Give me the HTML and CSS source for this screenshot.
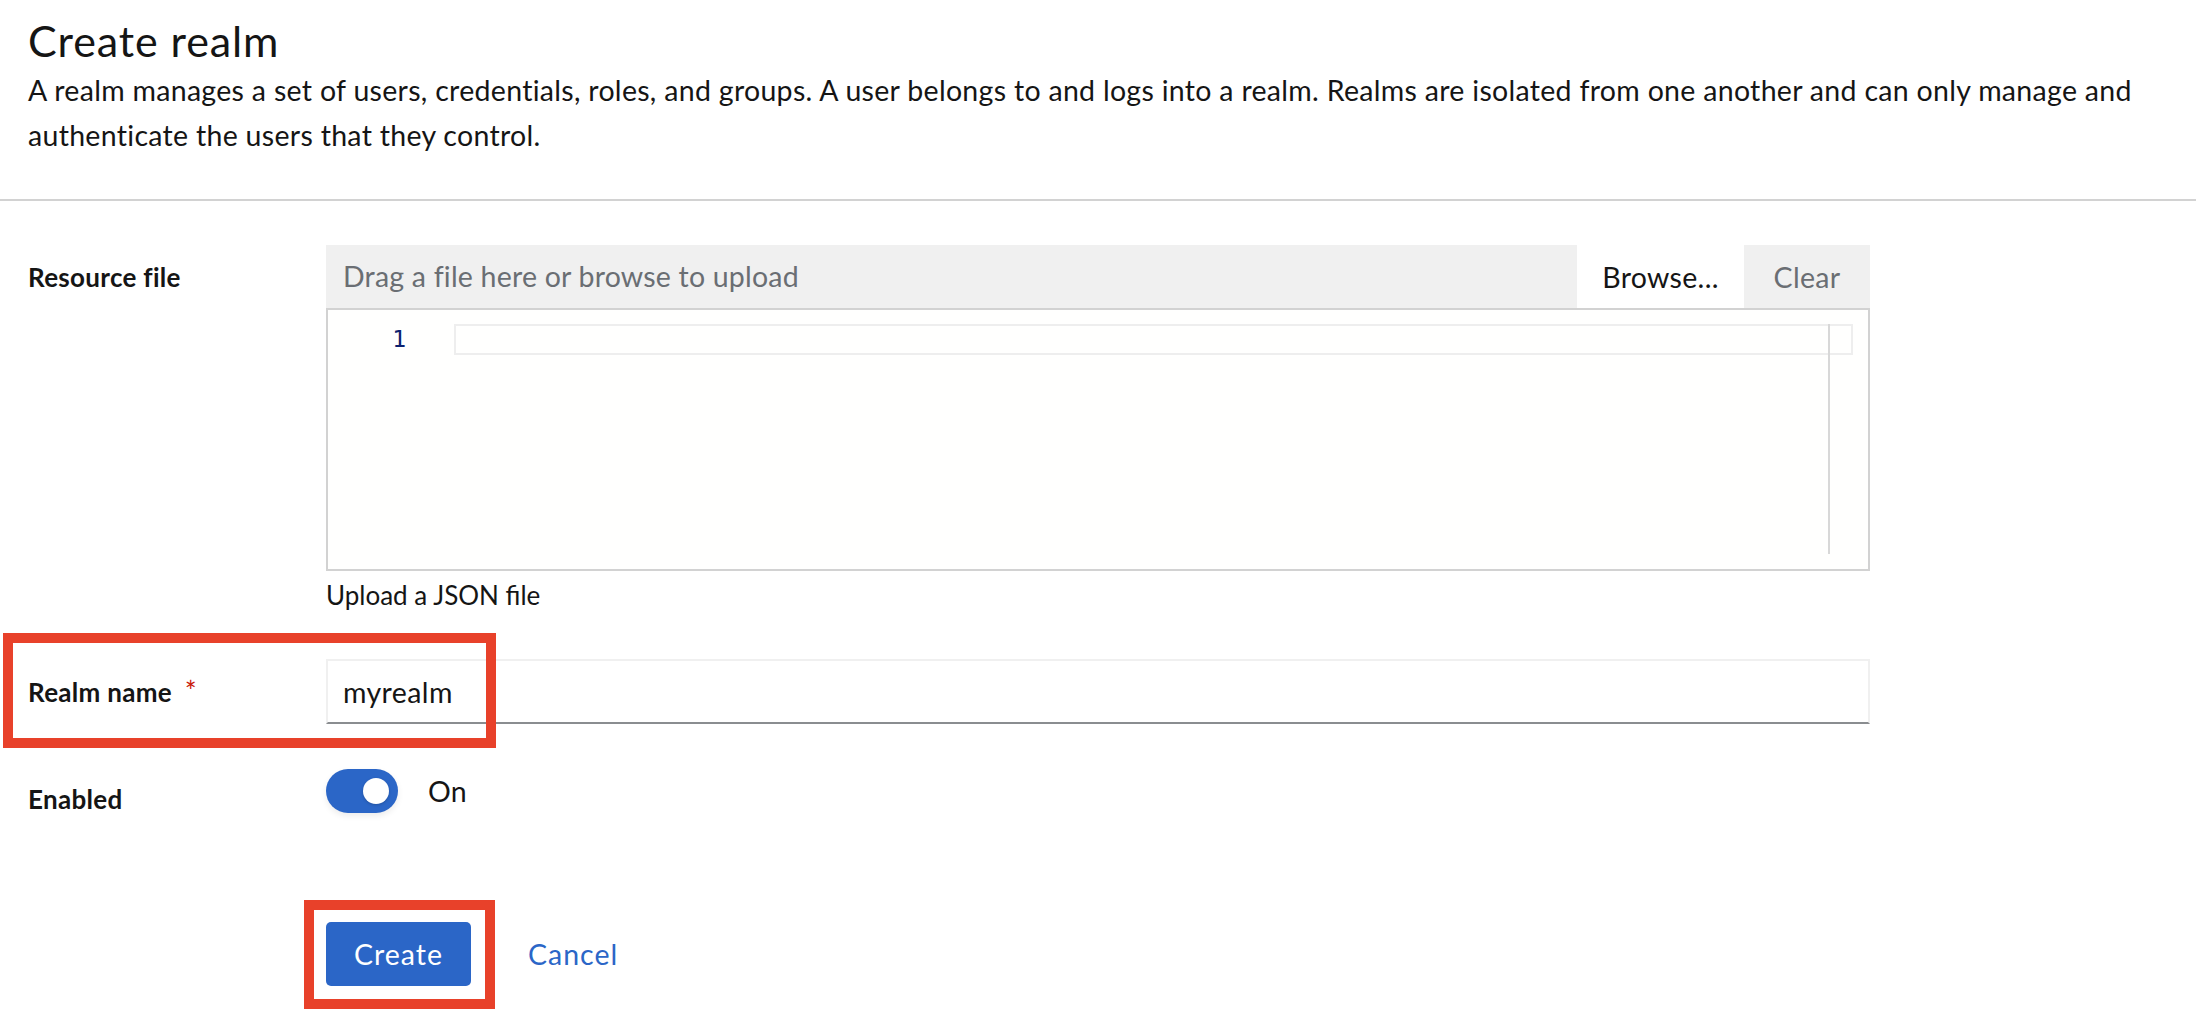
FILE: index.html
```html
<!DOCTYPE html>
<html lang="en">
<head>
<meta charset="utf-8">
<title>Create realm</title>
<link rel="stylesheet" href="styles.css">
</head>
<body>
<header class="page-header">
  <h1 class="title">Create realm</h1>
  <p class="desc">A realm manages a set of users, credentials, roles, and groups. A user belongs to and logs into a realm. Realms are isolated from one another and can only manage and authenticate the users that they control.</p>
</header>
<main class="form">
  <div class="row row-file">
    <div class="label label-file">Resource file</div>
    <div class="control">
      <div class="upload-bar">
        <div class="upload-placeholder">Drag a file here or browse to upload</div>
        <button class="btn-browse" type="button">Browse...</button>
        <button class="btn-clear" type="button">Clear</button>
      </div>
      <div class="editor">
        <div class="gutter"><span class="line-no">1</span></div>
        <div class="code-area">
          <div class="current-line"></div>
          <div class="ruler"></div>
        </div>
      </div>
      <div class="helper">Upload a JSON file</div>
    </div>
  </div>
  <div class="row row-name">
    <div class="label label-name">Realm name <span class="required">*</span></div>
    <div class="control">
      <input class="text-input" type="text" value="myrealm">
    </div>
  </div>
  <div class="row row-enabled">
    <div class="label label-enabled">Enabled</div>
    <div class="control">
      <div class="toggle-wrap">
        <div class="toggle"><div class="toggle-knob"></div></div>
        <span class="toggle-label">On</span>
      </div>
    </div>
  </div>
  <div class="actions">
    <button class="btn-primary" type="button">Create</button>
    <button class="btn-link" type="button">Cancel</button>
  </div>
</main>
<div class="annot annot-name"></div>
<div class="annot annot-create"></div>
</body>
</html>
```

FILE: styles.css
```css
* { box-sizing: border-box; }
html, body { margin: 0; padding: 0; background: #ffffff; }
body {
  font-family: Lato, "Liberation Sans", sans-serif;
  color: #151515;
  position: relative;
  width: 2196px;
  min-height: 1032px;
}

/* header */
.page-header {
  padding: 13px 28px 41px;
  border-bottom: 2px solid #d2d2d2;
}
.title {
  margin: 0;
  font-size: 43px;
  line-height: 55px;
  font-weight: 400;
  letter-spacing: 0.9px;
}
.desc {
  margin: 0;
  font-size: 28.5px;
  line-height: 45px;
  letter-spacing: 0.3px;
}

/* form */
.form { padding: 44px 0 0 28px; }
.row {
  display: grid;
  grid-template-columns: 298px 1544px;
  align-items: start;
}
.row-file { margin-bottom: 46px; }
.row-name { margin-bottom: 45px; }
.row-enabled { margin-bottom: 105px; }

.label {
  font-size: 26px;
  line-height: 36px;
  font-weight: 700;
  letter-spacing: 0.3px;
}
.label-file, .label-name { padding-top: 14px; }
.label-enabled { padding-top: 12px; }
.required {
  color: #c9190b;
  font-weight: 400;
  font-size: 28px;
  margin-left: 6px;
}

/* file upload */
.upload-bar {
  display: flex;
  height: 63px;
  background: #f0f0f0;
}
.upload-placeholder {
  flex: 1;
  padding-left: 17px;
  font-size: 28.5px;
  line-height: 63px;
  letter-spacing: 0.2px;
  color: #6a6e73;
}
.btn-browse, .btn-clear {
  border: none;
  padding: 0;
  font-family: inherit;
  font-size: 28.5px;
  letter-spacing: 0.3px;
  height: 63px;
}
.btn-browse {
  width: 167px;
  background: #ffffff;
  color: #151515;
}
.btn-clear {
  width: 126px;
  background: transparent;
  color: #6a6e73;
}

.editor {
  display: flex;
  height: 263px;
  border: 2px solid #d2d2d2;
  background: #fffffe;
}
.gutter {
  width: 126px;
  padding: 14px 48px 0 0;
  text-align: right;
}
.line-no {
  font-family: "DejaVu Sans Mono", "Liberation Mono", monospace;
  font-size: 23px;
  line-height: 31px;
  color: #0b216f;
}
.code-area {
  flex: 1;
  position: relative;
  padding: 14px 15px 0 0;
}
.current-line {
  height: 31px;
  border: 2px solid #eeeeee;
}
.ruler {
  position: absolute;
  top: 14px;
  right: 38px;
  width: 2px;
  height: 230px;
  background: #d8d8d8;
}
.helper {
  margin-top: 6px;
  font-size: 26px;
  line-height: 36px;
}

/* text input */
.text-input {
  display: block;
  width: 100%;
  height: 65px;
  border: 2px solid #f0f0f0;
  border-bottom-color: #8a8d90;
  padding: 0 15px;
  font-family: inherit;
  font-size: 28.5px;
  letter-spacing: 0.4px;
  color: #151515;
  background: #ffffff;
  outline: none;
}

/* toggle */
.toggle-wrap {
  display: flex;
  align-items: center;
  gap: 30px;
  height: 44px;
}
.toggle {
  width: 72px;
  height: 44px;
  border-radius: 22px;
  background: #2b66c7;
  display: flex;
  align-items: center;
  justify-content: flex-end;
  padding-right: 9px;
  box-shadow: 0 3px 6px rgba(0, 0, 0, 0.08);
}
.toggle-knob {
  width: 26px;
  height: 26px;
  border-radius: 50%;
  background: #ffffff;
  box-shadow: 0 1px 3px rgba(0, 0, 0, 0.2);
}
.toggle-label {
  font-size: 28.5px;
  line-height: 44px;
  letter-spacing: 0.3px;
}

/* actions */
.actions {
  display: flex;
  align-items: center;
  margin-left: 298px;
}
.btn-primary {
  height: 64px;
  padding: 0 28px;
  border: none;
  border-radius: 5px;
  background: #2b66c7;
  color: #ffffff;
  font-family: inherit;
  font-size: 28.5px;
  letter-spacing: 1px;
}
.btn-link {
  margin-left: 57px;
  padding: 0;
  border: none;
  background: none;
  color: #2b66c7;
  font-family: inherit;
  font-size: 28.5px;
  letter-spacing: 1px;
}

/* annotation rectangles drawn over the screenshot */
.annot {
  position: absolute;
  border: 10px solid #e8412a;
}
.annot-name {
  left: 3px;
  top: 633px;
  width: 493px;
  height: 115px;
}
.annot-create {
  left: 304px;
  top: 900px;
  width: 191px;
  height: 109px;
}
```
